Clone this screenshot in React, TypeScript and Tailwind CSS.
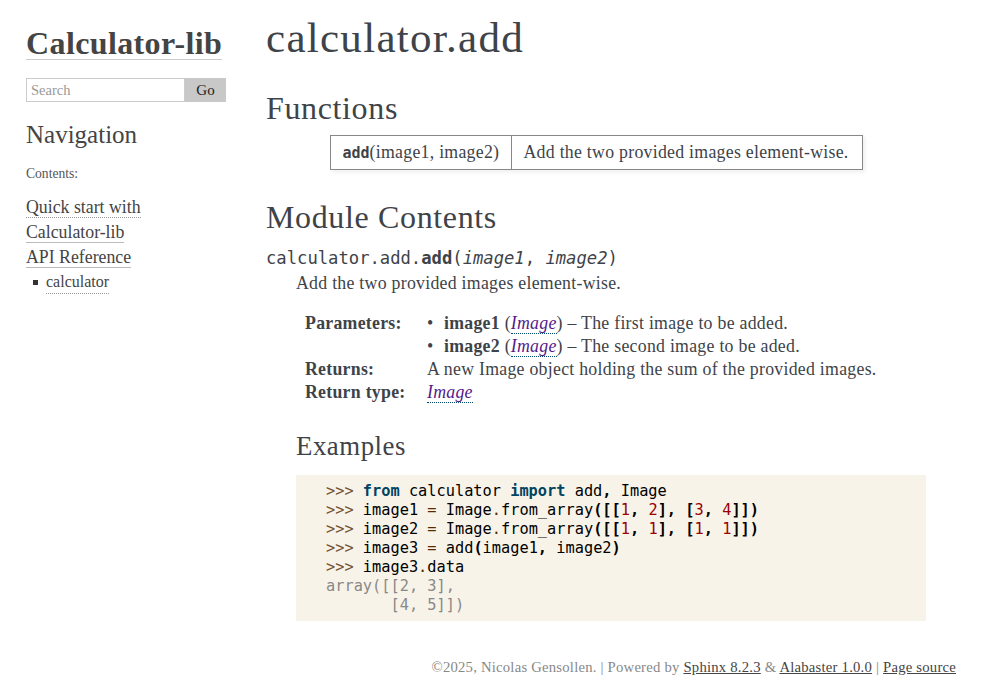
import React from "react";

const sig = "font-['DejaVu_Sans_Mono',monospace]";

function Prompt() {
  return <span className="text-[#745334]">&gt;&gt;&gt; </span>;
}

function Op({ children }: { children: React.ReactNode }) {
  return <span className="text-[#582800]">{children}</span>;
}

function P({ children }: { children: React.ReactNode }) {
  return <span className="font-bold text-black">{children}</span>;
}

function N({ children }: { children: React.ReactNode }) {
  return <span className="text-[#990000]">{children}</span>;
}

function K({ children }: { children: React.ReactNode }) {
  return <span className="font-bold text-[#004461]">{children}</span>;
}

function ImageLink() {
  return (
    <a className="italic text-[#551a8b] border-b border-dotted border-[#004b6b]">Image</a>
  );
}

function Sidebar() {
  return (
    <div className="w-[200px] shrink-0 text-[#444]">
      <div className="pt-[27px]">
        <a className="inline-block text-[32px] leading-[32px] font-bold tracking-[0.012em] border-b border-[#ccc] text-[#444]">
          Calculator-lib
        </a>
      </div>
      <div className="mt-[17px] flex h-[24px]">
        <input
          placeholder="Search"
          className="w-[159px] h-[24px] border border-[#ccc] bg-white px-[4px] text-[14.5px] text-[#444] placeholder:text-[#999] outline-none"
        />
        <button className="w-[41px] h-[24px] bg-[#c8c8c8] border border-[#c8c8c8] text-[15px] text-[#222]">Go</button>
      </div>
      <h3 className="mt-[20px] text-[25px] leading-[25px] text-[#444]">Navigation</h3>
      <p className="mt-[18px] text-[13.6px] leading-[18px] text-[#555]">Contents:</p>
      <ul className="mt-[12px] text-[17.8px] leading-[25px]">
        <li>
          <a className="border-b border-dotted border-[#999]">Quick start with</a>
          <br />
          <a className="border-b border-[#bbb]">Calculator-lib</a>
        </li>
        <li>
          <a className="border-b border-[#bbb]">API Reference</a>
        </li>
        <li className="flex items-center text-[16px] leading-[23px]">
          <span className="ml-[7px] mr-[8px] w-[5px] h-[5px] bg-[#333]" />
          <a className="border-b border-dotted border-[#999]">calculator</a>
        </li>
      </ul>
    </div>
  );
}

function Main() {
  return (
    <div className="w-[660px] shrink-0 text-[#3e4349]">
      <h1 className="pt-[16px] text-[43px] leading-[43px] tracking-[0.03em]">calculator.add</h1>
      <h2 className="mt-[33px] text-[32px] leading-[32px] tracking-[0.02em]">Functions</h2>
      <div className="mt-[11px] flex justify-center">
        <table className="table-fixed w-[533px] border border-[#888] shadow-[2px_2px_4px_#eee] text-[17.8px] tracking-[0.015em] whitespace-nowrap">
          <tbody>
            <tr className="h-[34px]">
              <td className="w-[181px] pl-[12px] pr-0 border-r border-[#888]">
                <span className={`${sig} font-bold text-[15px] tracking-normal`}>add</span>(image1, image2)
              </td>
              <td className="pl-[12px]">Add the two provided images element-wise.</td>
            </tr>
          </tbody>
        </table>
      </div>
      <h2 className="mt-[31px] text-[32px] leading-[32px] tracking-[0.02em]">Module Contents</h2>
      <div className={`${sig} mt-[15px] text-[17.2px] leading-[21px] text-[#3e4349]`}>
        calculator.add.<span className="font-bold">add</span>(<span className="italic">image1</span>, <span className="italic">image2</span>)
      </div>
      <div className="pl-[30px]">
        <p className="mt-[3px] text-[17.8px] leading-[23px] tracking-[0.015em]">Add the two provided images element-wise.</p>
        <div className="mt-[17px] grid grid-cols-[122px_1fr] pl-[9px] text-[17.8px] leading-[23px] tracking-[0.015em]">
          <div className="font-bold">Parameters:</div>
          <div>
            <div className="flex">
              <span className="w-[17px]">•</span>
              <span>
                <b>image1</b> (<ImageLink />) – The first image to be added.
              </span>
            </div>
            <div className="flex">
              <span className="w-[17px]">•</span>
              <span>
                <b>image2</b> (<ImageLink />) – The second image to be aded.
              </span>
            </div>
          </div>
          <div className="font-bold">Returns:</div>
          <div>A new Image object holding the sum of the provided images.</div>
          <div className="font-bold">Return type:</div>
          <div>
            <ImageLink />
          </div>
        </div>
        <p className="mt-[29px] text-[26.8px] leading-[27px] tracking-[0.02em]">Examples</p>
        <pre className={`${sig} mt-[15px] bg-[#f8f3e9] pl-[30px] pt-[7px] pb-[6px] text-[15.3px] leading-[19px] text-black whitespace-pre`}>
          <div>
            <Prompt />
            <K>from</K> calculator <K>import</K> add<P>,</P> Image
          </div>
          <div>
            <Prompt />
            image1 <Op>=</Op> Image<Op>.</Op>from_array<P>([[</P><N>1</N><P>,</P> <N>2</N><P>],</P> <P>[</P><N>3</N><P>,</P> <N>4</N><P>]])</P>
          </div>
          <div>
            <Prompt />
            image2 <Op>=</Op> Image<Op>.</Op>from_array<P>([[</P><N>1</N><P>,</P> <N>1</N><P>],</P> <P>[</P><N>1</N><P>,</P> <N>1</N><P>]])</P>
          </div>
          <div>
            <Prompt />
            image3 <Op>=</Op> add<P>(</P>image1<P>,</P> image2<P>)</P>
          </div>
          <div>
            <Prompt />
            image3<Op>.</Op>data
          </div>
          <div className="text-[#888]">array([[2, 3],</div>
          <div className="text-[#888]">{"       [4, 5]])"}</div>
        </pre>
      </div>
    </div>
  );
}

export default function App() {
  return (
    <div className="min-h-[700px] w-[982px] bg-white font-['Liberation_Serif',serif] text-[#3e4349]">
      <div className="flex items-start gap-[40px] pl-[26px]">
        <Sidebar />
        <Main />
      </div>
      <div className="mt-[36px] pr-[26px] text-right text-[14.7px] leading-[20px] tracking-[0.015em] text-[#888]">
        ©2025, Nicolas Gensollen. | Powered by <a className="underline text-[#444]">Sphinx 8.2.3</a> &amp;{" "}
        <a className="underline text-[#444]">Alabaster 1.0.0</a> | <a className="underline text-[#444]">Page source</a>
      </div>
    </div>
  );
}
